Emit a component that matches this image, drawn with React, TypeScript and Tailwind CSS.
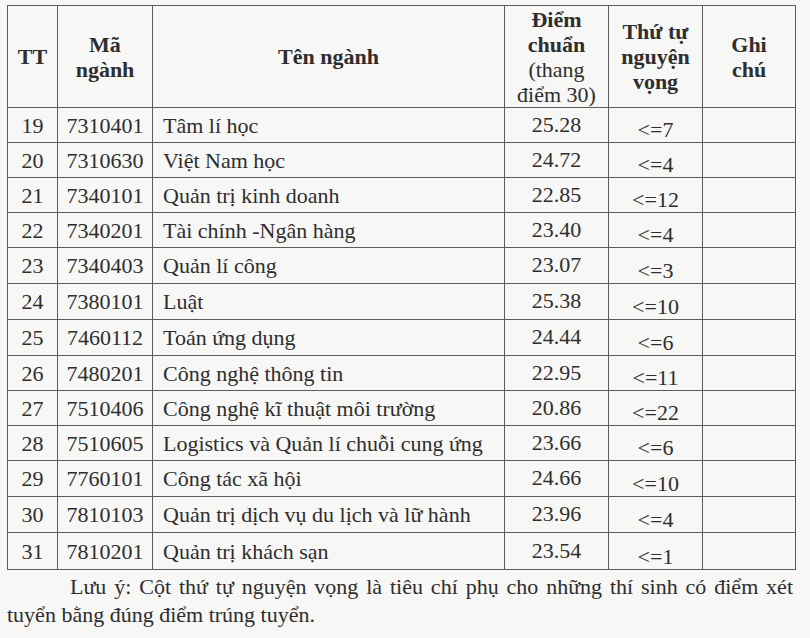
import React from "react";

const rows: [string, string, string, string, string, string][] = [
  ["19", "7310401", "Tâm lí học", "25.28", "<=7", "h-[35px]"],
  ["20", "7310630", "Việt Nam học", "24.72", "<=4", "h-[35px]"],
  ["21", "7340101", "Quản trị kinh doanh", "22.85", "<=12", "h-[35px]"],
  ["22", "7340201", "Tài chính -Ngân hàng", "23.40", "<=4", "h-[35px]"],
  ["23", "7340403", "Quản lí công", "23.07", "<=3", "h-[36px]"],
  ["24", "7380101", "Luật", "25.38", "<=10", "h-[36px]"],
  ["25", "7460112", "Toán ứng dụng", "24.44", "<=6", "h-[36px]"],
  ["26", "7480201", "Công nghệ thông tin", "22.95", "<=11", "h-[35px]"],
  ["27", "7510406", "Công nghệ kĩ thuật môi trường", "20.86", "<=22", "h-[35px]"],
  ["28", "7510605", "Logistics và Quản lí chuỗi cung ứng", "23.66", "<=6", "h-[35px]"],
  ["29", "7760101", "Công tác xã hội", "24.66", "<=10", "h-[36px]"],
  ["30", "7810103", "Quản trị dịch vụ du lịch và lữ hành", "23.96", "<=4", "h-[36px]"],
  ["31", "7810201", "Quản trị khách sạn", "23.54", "<=1", "h-[37px]"],
];

const cell = "border-[1.5px] border-[#5c5c5c]";

export default function App() {
  return (
    <div className="w-[810px] h-[638px] bg-[#f7f7f5] text-[#2e2e2e] pt-[5px] pl-[7px] overflow-hidden font-['Liberation_Serif',serif]">
      <table className="table-fixed border-collapse w-[788px] text-[22px] leading-[25px]">
        <colgroup>
          <col className="w-[50px]" />
          <col className="w-[95px]" />
          <col className="w-[352px]" />
          <col className="w-[104px]" />
          <col className="w-[94px]" />
          <col className="w-[93px]" />
        </colgroup>
        <thead>
          <tr className="h-[102px]">
            <th className={`${cell} font-bold text-center align-middle p-0`}>TT</th>
            <th className={`${cell} font-bold text-center align-middle p-0`}>
              Mã
              <br />
              ngành
            </th>
            <th className={`${cell} font-bold text-center align-middle p-0`}>Tên ngành</th>
            <th className={`${cell} text-center align-middle p-0`}>
              <span className="font-bold">
                Điểm
                <br />
                chuẩn
              </span>
              <br />
              <span className="font-normal">
                (thang
                <br />
                điểm 30)
              </span>
            </th>
            <th className={`${cell} font-bold text-center align-middle p-0`}>
              Thứ tự
              <br />
              nguyện
              <br />
              vọng
            </th>
            <th className={`${cell} font-bold text-center align-middle p-0`}>
              Ghi
              <br />
              chú
            </th>
          </tr>
        </thead>
        <tbody>
          {rows.map((r) => (
            <tr key={r[0]} className={r[5]}>
              <td className={`${cell} text-center align-middle p-0`}>{r[0]}</td>
              <td className={`${cell} text-center align-middle p-0`}>{r[1]}</td>
              <td className={`${cell} text-left align-middle p-0 pl-[10px]`}>{r[2]}</td>
              <td className={`${cell} text-center align-middle p-0 pb-[2px]`}>{r[3]}</td>
              <td className={`${cell} text-center align-bottom p-0`}>{r[4]}</td>
              <td className={`${cell} p-0`}></td>
            </tr>
          ))}
        </tbody>
      </table>
      <p className="w-[786px] mt-[3px] text-[22px] leading-[28px] text-justify indent-[63px]">
        Lưu ý: Cột thứ tự nguyện vọng là tiêu chí phụ cho những thí sinh có điểm xét tuyển bằng đúng điểm trúng tuyển.
      </p>
    </div>
  );
}
